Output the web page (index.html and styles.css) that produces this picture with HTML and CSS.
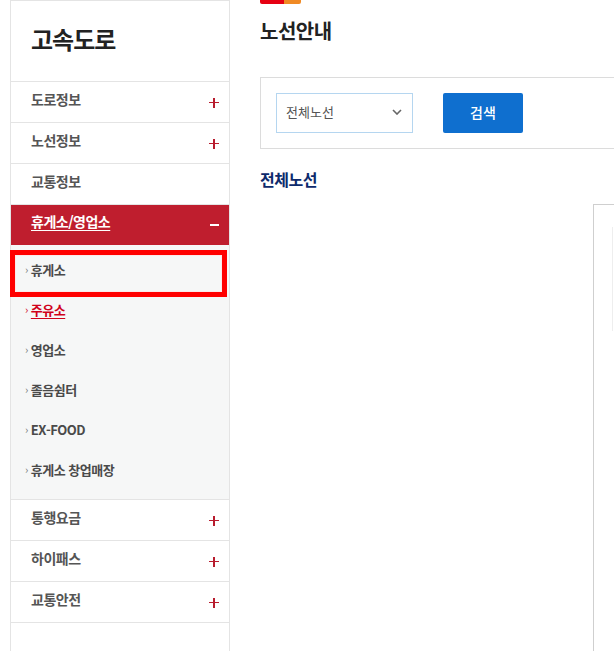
FILE: index.html
```html
<!DOCTYPE html>
<html lang="ko">
<head>
<meta charset="utf-8">
<title>노선안내</title>
<link rel="stylesheet" href="styles.css">
</head>
<body>
<div class="page">
  <aside class="lnb">
    <h2 class="lnb-title">고속도로</h2>
    <ul class="lnb-menu">
      <li class="item"><div class="row"><span class="label">도로정보</span><span class="plus"></span></div></li>
      <li class="item"><div class="row"><span class="label">노선정보</span><span class="plus"></span></div></li>
      <li class="item"><div class="row"><span class="label">교통정보</span></div></li>
      <li class="item on">
        <div class="row"><span class="label">휴게소/영업소</span><span class="minus"></span></div>
        <ul class="sub">
          <li><span class="chev">›</span><span>휴게소</span></li>
          <li class="cur"><span class="chev">›</span><span>주유소</span></li>
          <li><span class="chev">›</span><span>영업소</span></li>
          <li><span class="chev">›</span><span>졸음쉼터</span></li>
          <li><span class="chev">›</span><span>EX-FOOD</span></li>
          <li><span class="chev">›</span><span>휴게소 창업매장</span></li>
        </ul>
      </li>
      <li class="item"><div class="row"><span class="label">통행요금</span><span class="plus"></span></div></li>
      <li class="item"><div class="row"><span class="label">하이패스</span><span class="plus"></span></div></li>
      <li class="item"><div class="row"><span class="label">교통안전</span><span class="plus"></span></div></li>
    </ul>
    <div class="highlight"></div>
  </aside>
  <main class="content">
    <div class="brand-bar"><span class="b-red"></span><span class="b-orange"></span></div>
    <h2 class="page-title">노선안내</h2>
    <div class="search-box">
      <div class="select">
        <span>전체노선</span>
        <svg class="caret" width="10" height="6" viewBox="0 0 10 6"><path d="M1 1 L5 5 L9 1" fill="none" stroke="#666" stroke-width="1.6"/></svg>
      </div>
      <button class="btn">검색</button>
    </div>
    <h3 class="sec-title">전체노선</h3>
    <div class="map-box"><div class="map-inner"></div></div>
  </main>
</div>
</body>
</html>
```
FILE: styles.css
```css
* { box-sizing: border-box; margin: 0; padding: 0; }
html, body { width: 614px; height: 651px; overflow: hidden; }
body { font-family: "Noto Sans CJK KR", "Noto Sans", sans-serif; background: #fff; color: #333; }
ul { list-style: none; }

.page { display: flex; width: 614px; height: 651px; overflow: hidden; }

.lnb {
  flex: 0 0 220px;
  margin-left: 10px;
  border: 1px solid #e4e4e4;
  border-bottom: none;
  position: relative;
  height: 651px;
}
.lnb-title {
  height: 81px;
  border-bottom: 1px solid #e4e4e4;
  padding-left: 20px;
  font-size: 24px;
  font-weight: 700;
  line-height: 76px;
  color: #222;
  letter-spacing: -1px;
}
.row {
  height: 41px;
  border-bottom: 1px solid #e4e4e4;
  padding: 0 10px 6px 20px;
  display: flex;
  align-items: center;
  justify-content: space-between;
}
.label { font-size: 14px; font-weight: 700; color: #555; letter-spacing: -0.5px; }
.plus { width: 10px; height: 10px; position: relative; margin-top: 8px; }
.plus::before, .plus::after { content: ""; position: absolute; background: #b81c2e; }
.plus::before { left: 0; top: 4px; width: 10px; height: 1.4px; }
.plus::after { left: 4.3px; top: 0; width: 1.4px; height: 10px; }

.item.on .row { background: #bf1e2e; height: 40px; border-bottom: none; padding-bottom: 8px; }
.item.on .label { color: #fff; text-decoration: underline; text-underline-offset: 3px; }
.minus { width: 9px; height: 1.5px; background: #fff; margin-top: 8px; }

.sub {
  background: #f6f7f7;
  padding: 5px 0 9px;
  border-bottom: 1px solid #e4e4e4;
}
.sub li {
  height: 40px;
  display: flex;
  align-items: center;
  padding: 0 0 2px 14px;
  font-size: 13px;
  font-weight: 700;
  color: #4a4a4a;
  letter-spacing: -0.5px;
}
.chev { font-size: 11px; font-weight: 400; color: #777; margin-right: 3px; }
.sub li.cur span:last-child { color: #d0021b; text-decoration: underline; text-underline-offset: 3px; }
.sub li.cur .chev { color: #d0021b; }

.highlight {
  position: absolute;
  left: -1px;
  top: 249px;
  width: 217px;
  height: 47px;
  border: 5px solid #ff0000;
  box-shadow: inset 0 0 0 1px #fbe9e9;
}

.content { flex: 0 0 420px; padding-left: 30px; }
.brand-bar { display: flex; height: 4px; }
.b-red { width: 24px; background: #e60012; border-radius: 0 0 0 2px; }
.b-orange { width: 17px; background: #f08a24; border-radius: 0 0 2px 0; }
.page-title {
  margin-top: 13px;
  font-size: 20px;
  line-height: 28px;
  font-weight: 700;
  color: #222;
  letter-spacing: -0.5px;
}
.search-box {
  margin-top: 32px;
  width: 400px;
  height: 72px;
  border: 1px solid #dcdcdc;
  padding: 15px 15px;
  display: flex;
  align-items: flex-start;
}
.select {
  width: 137px;
  height: 40px;
  border: 1px solid #b5d6f0;
  padding: 0 9px 4px;
  display: flex;
  align-items: center;
  justify-content: space-between;
  font-size: 13px;
  color: #555;
}
.caret { margin-right: 1px; margin-top: 2px; }
.btn {
  margin-left: 30px;
  width: 80px;
  height: 40px;
  border: none;
  border-radius: 2px;
  background: #0f6fcf;
  color: #fff;
  font-family: inherit;
  font-size: 14px;
  font-weight: 500;
  padding-bottom: 2px;
}
.sec-title {
  margin-top: 19px;
  font-size: 16px;
  line-height: 22px;
  font-weight: 700;
  color: #0d2a6c;
  letter-spacing: -0.5px;
}
.map-box {
  margin-top: 14px;
  margin-left: 333px;
  width: 60px;
  height: 460px;
  border-left: 1px solid #cfcfcf;
  border-top: 1px solid #cfcfcf;
  padding: 22px 0 0 18px;
}
.map-inner { width: 10px; height: 104px; border-left: 1px solid #eeeeee; }
```
